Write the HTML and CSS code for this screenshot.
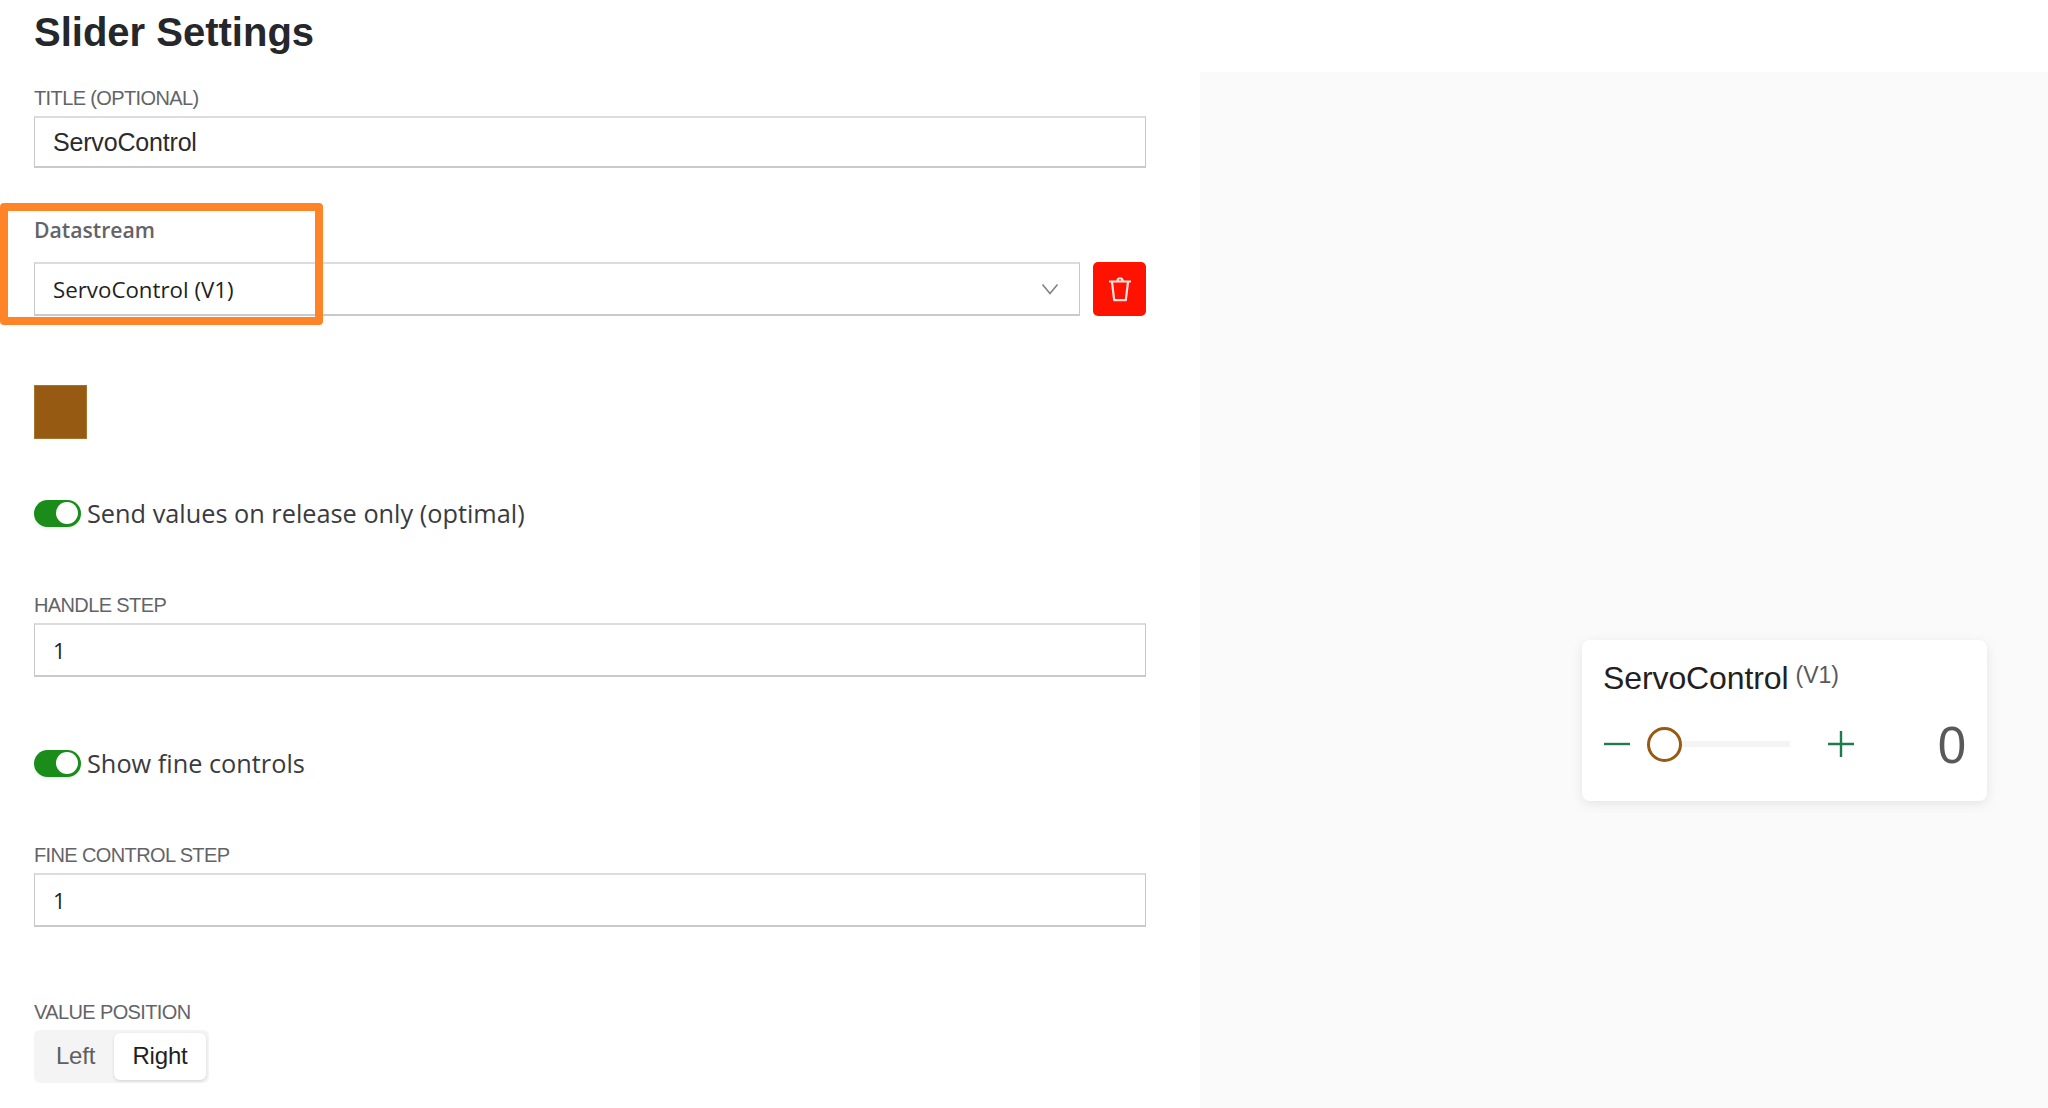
FILE: index.html
```html
<!DOCTYPE html>
<html lang="en">
<head>
<meta charset="utf-8">
<title>Slider Settings</title>
<link rel="stylesheet" href="styles.css">
</head>
<body>
<div class="page">
  <main class="form">
    <h1 class="heading">Slider Settings</h1>
    <div class="field field-title">
      <label class="label">TITLE (OPTIONAL)</label>
      <div class="input input-title">ServoControl</div>
    </div>
    <div class="field field-stream">
      <label class="stream-label">Datastream</label>
      <div class="stream-row">
        <div class="input select">
          <span>ServoControl (V1)</span>
          <svg class="chevron" viewBox="0 0 18 12" width="18" height="12"><path d="M1.5 1.5 9 10.5 16.5 1.5" fill="none" stroke="#808285" stroke-width="1.6"/></svg>
        </div>
        <button class="delete" type="button" aria-label="Delete">
          <svg viewBox="0 0 24 28" width="24" height="28"><path d="M1 6.5h22M9.5 5.5c0-3 5-3 5 0M4 7l2.2 18.2h11.6L20 7" fill="none" stroke="#ffe4e0" stroke-width="2.2" stroke-linejoin="round"/></svg>
        </button>
      </div>
      <div class="callout"></div>
    </div>
    <div class="swatch"></div>
    <div class="toggle-row toggle-first">
      <span class="toggle"><span class="knob"></span></span>
      <span class="toggle-text">Send values on release only (optimal)</span>
    </div>
    <div class="field field-handle">
      <label class="label">HANDLE STEP</label>
      <div class="input input-num">1</div>
    </div>
    <div class="toggle-row toggle-second">
      <span class="toggle"><span class="knob"></span></span>
      <span class="toggle-text">Show fine controls</span>
    </div>
    <div class="field field-fine">
      <label class="label">FINE CONTROL STEP</label>
      <div class="input input-num">1</div>
    </div>
    <div class="field field-value">
      <label class="label">VALUE POSITION</label>
      <div class="segment">
        <span class="seg-item">Left</span>
        <span class="seg-item seg-active">Right</span>
      </div>
    </div>
  </main>
  <aside class="preview">
    <section class="card">
      <div class="card-title">ServoControl<sup class="card-pin">(V1)</sup></div>
      <div class="card-body">
        <svg class="step" viewBox="0 0 28 28" width="28" height="28"><path d="M1 14h26" stroke="#1f7a4d" stroke-width="2.4" fill="none"/></svg>
        <div class="slider">
          <span class="handle"></span>
          <span class="track"></span>
        </div>
        <svg class="step step-plus" viewBox="0 0 28 28" width="28" height="28"><path d="M1 14h26M14 1v26" stroke="#1f7a4d" stroke-width="2.4" fill="none"/></svg>
        <span class="card-value">0</span>
      </div>
    </section>
  </aside>
</div>
</body>
</html>
```
FILE: styles.css
```css
* { box-sizing: border-box; }
html, body { margin: 0; height: 1108px; overflow: hidden; background: #fff; }
body { font-family: "Liberation Sans", Arial, sans-serif; color: #231f20; }

.page { display: flex; height: 1108px; }

.form { width: 1200px; flex: none; padding: 0 54px 0 34px; }
.heading { margin: 0; height: 72px; padding-top: 9px; font-size: 40px; line-height: 46px; font-weight: 700; letter-spacing: 0; color: #26272b; }

.field { position: relative; }
.field-title { margin-top: 14px; }
.field-stream { margin-top: 50px; }
.field-handle { margin-top: 66px; }
.field-fine { margin-top: 66px; }
.field-value { margin-top: 73px; }

.label { display: block; height: 30px; font-size: 20px; line-height: 25px; letter-spacing: -0.62px; color: #636467; }
.stream-label { display: block; height: 24px; margin-bottom: 20px; font-family: "Open Sans", sans-serif; font-size: 21.2px; line-height: 24px; font-weight: 600; color: #636467; }

.input { height: 54px; border-style: solid; border-width: 2px 1px; border-color: #dcdcdc #c8c8c8 #cacaca; padding: 0 18px; display: flex; align-items: center; font-family: "Open Sans", sans-serif; font-size: 22px; color: #231f20; background: #fff; }
.input-title { height: 52px; padding-left: 18px; font-family: "Liberation Sans", Arial, sans-serif; font-size: 25px; letter-spacing: -0.18px; color: #2b2b2d; }

.stream-row { display: flex; gap: 13px; }
.select { flex: 1; justify-content: space-between; padding-right: 20px; font-size: 22.3px; }
.delete { width: 53px; height: 54px; flex: none; padding: 0; border: 0; border-radius: 5px; background: #ff1200; display: flex; align-items: center; justify-content: center; }
.callout { position: absolute; left: -34px; top: -15px; width: 323px; height: 122px; border: 8px solid #ff8427; border-radius: 4px; pointer-events: none; }

.swatch { width: 53px; height: 54px; margin-top: 69px; background: #965a12; border: 1px solid #a8732f; }

.toggle-row { display: flex; align-items: center; height: 28px; gap: 6px; }
.toggle-first { margin-top: 60px; }
.toggle-second { margin-top: 72px; }
.toggle { width: 47px; height: 27px; border-radius: 14px; background: #1a8c1a; display: flex; align-items: center; justify-content: flex-end; padding-right: 3px; box-shadow: 0 2px 3px rgba(0,0,0,.08); }
.knob { width: 22px; height: 22px; border-radius: 50%; background: #fff; }
.toggle-text { font-family: "Open Sans", sans-serif; font-size: 25.3px; color: #3a3b3e; }

.segment { display: inline-flex; height: 53px; padding: 3px; border-radius: 6px; background: #f4f4f4; width: 175px; }
.seg-item { display: flex; align-items: center; justify-content: center; padding-bottom: 2px; font-size: 24px; letter-spacing: -0.2px; color: #5e5f62; width: 77px; }
.seg-active { width: 92px; background: #fff; color: #231f20; border-radius: 6px; box-shadow: 0 1px 3px rgba(0,0,0,.14); }

.preview { flex: 1; margin-top: 72px; background: #fafafa; display: flex; justify-content: flex-end; align-items: flex-start; padding: 568px 61px 0 0; }
.card { width: 405px; height: 161px; background: #fff; border-radius: 8px; box-shadow: 0 3px 12px rgba(0,0,0,.09); padding: 19px 21px 0; }
.card-title { font-size: 32px; line-height: 38px; letter-spacing: -0.1px; color: #231f20; white-space: nowrap; }
.card-pin { font-size: 23px; line-height: 0; margin-left: 7px; color: #58595b; vertical-align: 6px; letter-spacing: 0; }
.card-body { display: flex; align-items: center; margin-top: 19px; height: 56px; }
.step { flex: none; }
.slider { position: relative; width: 176px; height: 36px; margin-left: 16px; display: flex; align-items: center; }
.handle { width: 35px; height: 35px; flex: none; border: 3px solid #965a12; border-radius: 50%; background: #fff; }
.track { width: 108px; height: 6px; background: #f4f4f4; }
.step-plus { margin-left: 4px; }
.card-value { margin-left: auto; margin-top: 3px; font-size: 51px; line-height: 56px; color: #58595b; }
```
